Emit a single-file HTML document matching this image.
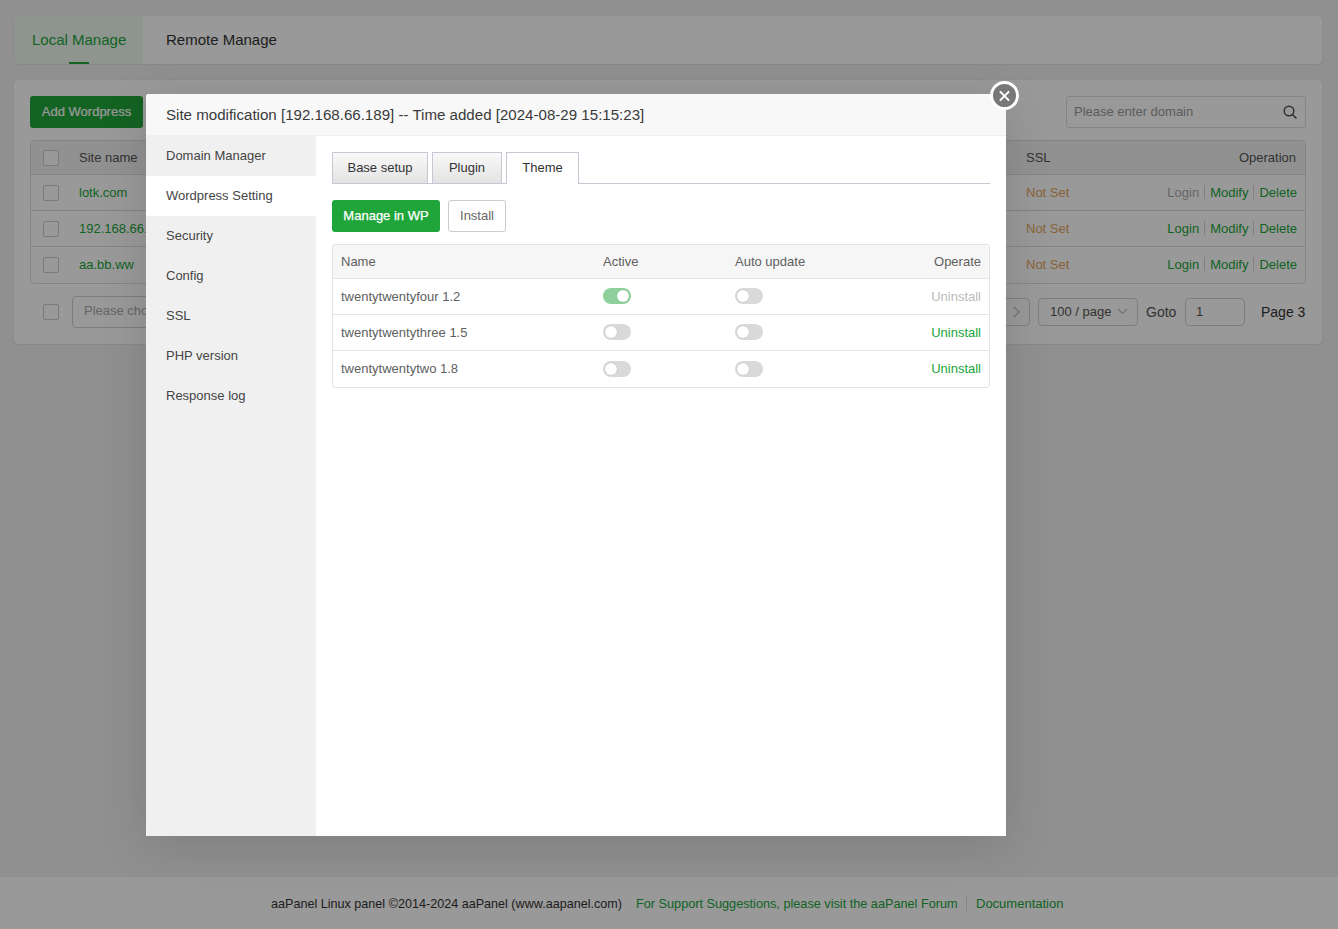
<!DOCTYPE html>
<html><head><meta charset="utf-8">
<style>
*{box-sizing:border-box;margin:0;padding:0}
html,body{width:1338px;height:929px;overflow:hidden}
body{background:#f0f0f0;font-family:"Liberation Sans",sans-serif;color:#333;position:relative;font-size:13px}
.a{position:absolute;white-space:nowrap}
.card{position:absolute;background:#fff;border-radius:4px;box-shadow:0 0 1px rgba(0,0,0,.18),0 1px 2px rgba(0,0,0,.06)}
.g{color:#20a53a}
.cb{position:absolute;width:16px;height:16px;border:1px solid #ccc;border-radius:2px;background:#fff}
.hl{position:absolute;height:1px;background:#e6e6e6}
.overlay{position:absolute;left:0;top:0;width:1338px;height:929px;background:rgba(0,0,0,0.4)}
.modal{position:absolute;left:146px;top:94px;width:860px;height:742px;background:#fff;border-radius:3px 3px 0 0;overflow:hidden;box-shadow:0 10px 50px rgba(0,0,0,.13)}
.mh{position:absolute;left:0;top:0;width:860px;height:42px;background:#f8f8f8;border-bottom:1px solid #eee;font-size:15.1px;line-height:41px;padding-left:20px;color:#3a3a3a}
.side{position:absolute;left:0;top:41px;width:170px;height:701px;background:#f0f0f0}
.si{position:absolute;left:0;width:170px;height:40px;line-height:40px;padding-left:20px;font-size:13px;color:#444}
.close{position:absolute;left:990px;top:81px;width:29px;height:29px;border-radius:50%;background:#787878;border:3px solid #fff}
.close:before,.close:after{content:"";position:absolute;left:5px;top:10.5px;width:13px;height:2px;background:#fff;transform:rotate(45deg)}
.close:after{transform:rotate(-45deg)}
.tb{position:absolute;top:152px;height:31px;border:1px solid #c8c8d4;border-bottom:none;background:linear-gradient(#f9f9f9,#e3e3e3);text-align:center;line-height:30px;color:#333}
.tb.on{background:#fff;z-index:2}
.sw{position:absolute;width:28px;height:16px;border-radius:8px;background:#d9d9d9}
.sw:after{content:"";position:absolute;left:2px;top:2px;width:12px;height:12px;border-radius:50%;background:#fff;box-shadow:0 0 1px rgba(0,0,0,.25)}
.sw.on{background:#8ed09c}
.sw.on:after{left:14px}
.tx{position:absolute;font-size:13px;color:#555;white-space:nowrap;line-height:16px}
</style></head><body>
<!-- top tabs card -->
<div class="card" style="left:14px;top:16px;width:1308px;height:48px;overflow:hidden">
  <div class="a" style="left:0;top:0;width:129px;height:48px;background:#edf8ef"></div>
  <div class="a g" style="left:18px;top:0;line-height:48px;font-size:15px">Local Manage</div>
  <div class="a" style="left:55px;top:46px;width:20px;height:2px;background:#20a53a"></div>
  <div class="a" style="left:152px;top:0;line-height:48px;font-size:15px;color:#333">Remote Manage</div>
</div>
<!-- main card -->
<div class="card" style="left:14px;top:80px;width:1308px;height:264px"></div>
<div class="a" style="left:30px;top:96px;width:113px;height:32px;line-height:32px;background:#20a53a;color:#fff;border-radius:3px;text-align:center;font-size:13px;-webkit-text-stroke:0.2px #fff">Add Wordpress</div>
<div class="a" style="left:1066px;top:96px;width:240px;height:32px;border:1px solid #ddd;border-radius:3px;background:#fff"></div>
<div class="a" style="left:1074px;top:96px;line-height:32px;color:#999">Please enter domain</div>
<svg class="a" style="left:1282px;top:104px" width="16" height="16" viewBox="0 0 16 16"><circle cx="7" cy="7" r="4.8" fill="none" stroke="#555" stroke-width="1.5"/><line x1="10.6" y1="10.6" x2="14" y2="14" stroke="#555" stroke-width="1.5" stroke-linecap="round"/></svg>
<!-- bg table -->
<div class="a" style="left:30px;top:140px;width:1276px;height:144px;border:1px solid #ddd;border-radius:4px;overflow:hidden;background:#fff">
  <div class="a" style="left:0;top:0;width:1276px;height:34px;background:#f2f2f2"></div>
  <div class="a" style="left:0;top:33px;width:1276px;height:1px;background:#ddd"></div>
  <div class="a" style="left:0;top:69px;width:1276px;height:1px;background:#ddd"></div>
  <div class="a" style="left:0;top:105px;width:1276px;height:1px;background:#ddd"></div>
</div>
<div class="cb" style="left:43px;top:150px"></div>
<div class="cb" style="left:43px;top:185px"></div>
<div class="cb" style="left:43px;top:221px"></div>
<div class="cb" style="left:43px;top:257px"></div>
<div class="a" style="left:79px;top:140px;line-height:35px;color:#555">Site name</div>
<div class="a g" style="left:79px;top:175px;line-height:35px">lotk.com</div>
<div class="a g" style="left:79px;top:211px;line-height:35px">192.168.66.189</div>
<div class="a g" style="left:79px;top:247px;line-height:36px">aa.bb.ww</div>
<div class="a" style="left:1026px;top:140px;line-height:35px;color:#555">SSL</div>
<div class="a" style="right:42px;top:140px;line-height:35px;color:#555">Operation</div>
<div class="a" style="left:1026px;top:175px;line-height:35px;color:#e2a55c">Not Set</div>
<div class="a" style="left:1026px;top:211px;line-height:35px;color:#e2a55c">Not Set</div>
<div class="a" style="left:1026px;top:247px;line-height:36px;color:#e2a55c">Not Set</div>
<div class="a" style="right:41px;top:175px;line-height:35px"><span style="color:#aaa">Login</span><span style="display:inline-block;width:1px;height:14px;background:#d5d5d5;margin:0 5px;vertical-align:-2px"></span><span class="g">Modify</span><span style="display:inline-block;width:1px;height:14px;background:#d5d5d5;margin:0 5px;vertical-align:-2px"></span><span class="g">Delete</span></div>
<div class="a" style="right:41px;top:211px;line-height:35px"><span class="g">Login</span><span style="display:inline-block;width:1px;height:14px;background:#d5d5d5;margin:0 5px;vertical-align:-2px"></span><span class="g">Modify</span><span style="display:inline-block;width:1px;height:14px;background:#d5d5d5;margin:0 5px;vertical-align:-2px"></span><span class="g">Delete</span></div>
<div class="a" style="right:41px;top:247px;line-height:36px"><span class="g">Login</span><span style="display:inline-block;width:1px;height:14px;background:#d5d5d5;margin:0 5px;vertical-align:-2px"></span><span class="g">Modify</span><span style="display:inline-block;width:1px;height:14px;background:#d5d5d5;margin:0 5px;vertical-align:-2px"></span><span class="g">Delete</span></div>
<!-- pagination -->
<div class="cb" style="left:43px;top:304px"></div>
<div class="a" style="left:72px;top:296px;width:200px;height:32px;border:1px solid #d0d0d0;border-radius:4px;background:#fff"></div>
<div class="a" style="left:84px;top:296px;line-height:30px;color:#aaa">Please choose</div>
<div class="a" style="left:990px;top:298px;width:40px;height:28px;border:1px solid #d0d0d0;border-radius:4px;background:#fff"></div>
<svg class="a" style="left:1012px;top:306px" width="10" height="12" viewBox="0 0 10 12"><polyline points="2,1 7,6 2,11" fill="none" stroke="#bbb" stroke-width="1.2"/></svg>
<div class="a" style="left:1038px;top:298px;width:100px;height:28px;border:1px solid #d0d0d0;border-radius:4px;background:#fff"></div>
<div class="a" style="left:1050px;top:298px;line-height:28px;color:#555">100 / page</div>
<svg class="a" style="left:1117px;top:306px" width="11" height="10" viewBox="0 0 11 10"><polyline points="1,3 5.5,7.5 10,3" fill="none" stroke="#bbb" stroke-width="1.1"/></svg>
<div class="a" style="left:1146px;top:298px;line-height:28px;color:#555;font-size:14px">Goto</div>
<div class="a" style="left:1185px;top:298px;width:60px;height:28px;border:1px solid #d0d0d0;border-radius:4px;background:#fff"></div>
<div class="a" style="left:1196px;top:298px;line-height:28px;color:#555">1</div>
<div class="a" style="left:1261px;top:298px;line-height:28px;color:#333;font-size:14px">Page 3</div>
<!-- footer -->
<div class="a" style="left:0;top:877px;width:1338px;height:52px;background:#fff"></div>
<div class="a" style="left:271px;top:878px;line-height:52px;font-size:12.6px;color:#333">aaPanel Linux panel ©2014-2024 aaPanel (www.aapanel.com)</div>
<div class="a g" style="left:636px;top:878px;line-height:52px;font-size:12.7px">For Support Suggestions, please visit the aaPanel Forum</div>
<div class="a" style="left:966px;top:895px;width:1px;height:16px;background:#ddd"></div>
<div class="a g" style="left:976px;top:878px;line-height:52px;font-size:13px">Documentation</div>

<div class="overlay"></div>

<div class="modal">
  <div class="mh">Site modification [192.168.66.189] -- Time added [2024-08-29 15:15:23]</div>
  <div class="side">
    <div class="si" style="top:0;height:41px;line-height:41px">Domain Manager</div>
    <div class="si" style="top:41px;background:#fff">Wordpress Setting</div>
    <div class="si" style="top:81px">Security</div>
    <div class="si" style="top:121px">Config</div>
    <div class="si" style="top:161px">SSL</div>
    <div class="si" style="top:201px">PHP version</div>
    <div class="si" style="top:241px">Response log</div>
  </div>
</div>
<!-- modal content in page coords -->

<div class="tb" style="left:332px;width:96px">Base setup</div>
<div class="tb" style="left:432px;width:70px">Plugin</div>
<div class="tb on" style="left:506px;width:73px;height:32px">Theme</div>
<div class="a" style="left:332px;top:183px;width:658px;height:1px;background:#c8c8d4;z-index:1"></div>
<div class="a" style="left:332px;top:200px;width:108px;height:32px;line-height:32px;background:#20a53a;color:#fff;border-radius:3px;text-align:center;-webkit-text-stroke:0.25px #fff">Manage in WP</div>
<div class="a" style="left:448px;top:200px;width:58px;height:32px;line-height:30px;border:1px solid #ccc;border-radius:3px;background:#fff;color:#666;text-align:center">Install</div>
<!-- theme table -->
<div class="a" style="left:332px;top:244px;width:658px;height:144px;border:1px solid #e4e4e4;border-radius:3px;overflow:hidden;background:#fff">
  <div class="a" style="left:0;top:0;width:658px;height:34px;background:#f6f6f6"></div>
  <div class="a" style="left:0;top:33px;width:658px;height:1px;background:#e4e4e4"></div>
  <div class="a" style="left:0;top:69px;width:658px;height:1px;background:#e4e4e4"></div>
  <div class="a" style="left:0;top:105px;width:658px;height:1px;background:#e4e4e4"></div>
</div>
<div class="a" style="left:341px;top:244px;line-height:35px;color:#606060">Name</div>
<div class="a" style="left:603px;top:244px;line-height:35px;color:#606060">Active</div>
<div class="a" style="left:735px;top:244px;line-height:35px;color:#606060">Auto update</div>
<div class="a" style="right:357px;top:244px;line-height:35px;color:#606060">Operate</div>
<div class="a" style="left:341px;top:279px;line-height:35px;color:#606060">twentytwentyfour 1.2</div>
<div class="a" style="left:341px;top:315px;line-height:35px;color:#606060">twentytwentythree 1.5</div>
<div class="a" style="left:341px;top:351px;line-height:36px;color:#606060">twentytwentytwo 1.8</div>
<div class="sw on" style="left:603px;top:288px"></div>
<div class="sw" style="left:603px;top:324px"></div>
<div class="sw" style="left:603px;top:361px"></div>
<div class="sw" style="left:735px;top:288px"></div>
<div class="sw" style="left:735px;top:324px"></div>
<div class="sw" style="left:735px;top:361px"></div>
<div class="a" style="right:357px;top:279px;line-height:35px;color:#bbb">Uninstall</div>
<div class="a g" style="right:357px;top:315px;line-height:35px">Uninstall</div>
<div class="a g" style="right:357px;top:351px;line-height:36px">Uninstall</div>

<div class="close"></div>
</body></html>
